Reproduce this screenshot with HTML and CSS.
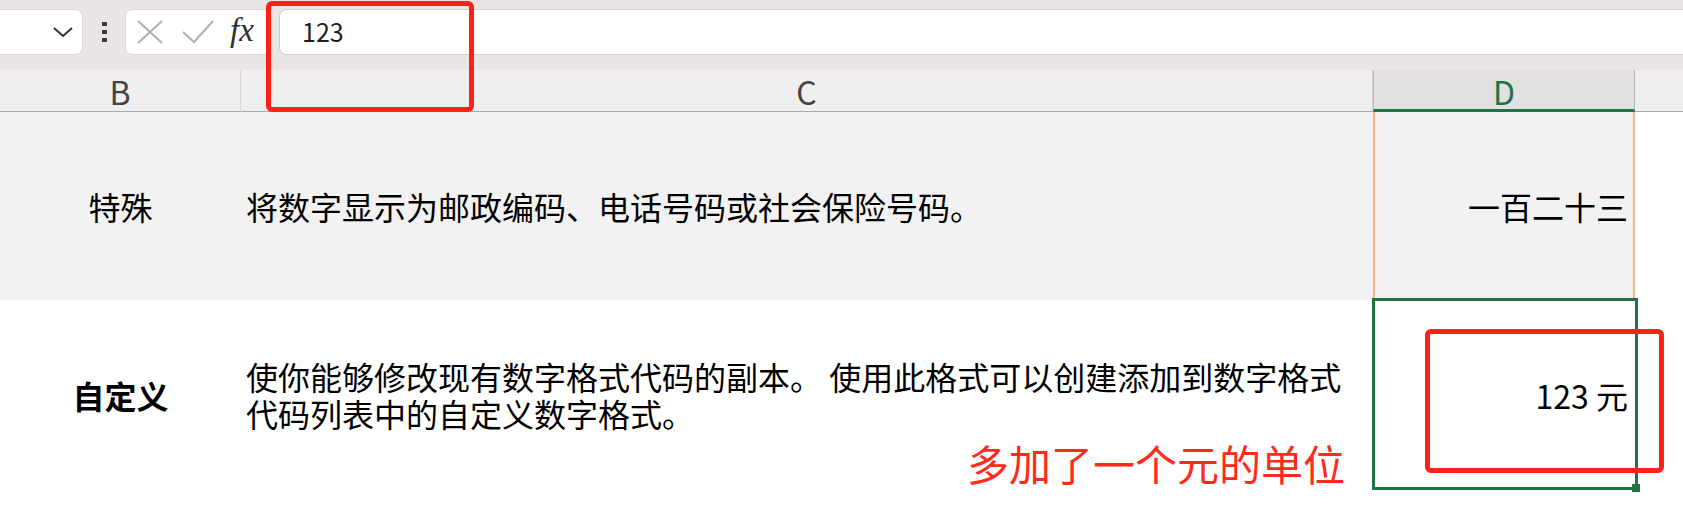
FILE: index.html
```html
<!DOCTYPE html>
<html lang="zh-CN">
<head>
    <meta charset="UTF-8">
    <title>数字格式 - 自定义</title>
    <link rel="stylesheet" href="styles.css">
</head>
<body>

    <!-- Formula bar -->
    <div class="toolbar">
        <div class="namebox">
            <svg class="chevron" width="20" height="12" viewBox="0 0 20 12">
                <polyline points="1,2 10,10 19,2" fill="none" stroke="#333" stroke-width="2"/>
            </svg>
        </div>
        <div class="grip"><span></span><span></span><span></span></div>
        <div class="fbtns">
            <svg width="26" height="24" viewBox="0 0 26 24">
                <path d="M1 1 L25 23 M25 1 L1 23" stroke="#b0b0b0" stroke-width="2" fill="none"/>
            </svg>
            <svg class="check" width="32" height="24" viewBox="0 0 32 24">
                <polyline points="1,12 12,22 31,1" stroke="#b0b0b0" stroke-width="2" fill="none"/>
            </svg>
            <span class="fx">fx</span>
        </div>
        <div class="finput">123</div>
    </div>

    <!-- Sheet -->
    <div class="sheet">
        <div class="hd">B</div>
        <div class="hd">C</div>
        <div class="hd hd-sel">D</div>
        <div class="hd hd-rest"></div>

        <div class="cell c-name shade">特殊</div>
        <div class="cell c-desc shade">将数字显示为邮政编码、电话号码或社会保险号码。</div>
        <div class="cell c-val shade sel-col">一百二十三</div>
        <div class="cell"></div>

        <div class="cell c-name strong">自定义</div>
        <div class="cell c-desc">
            <span class="wrap">使你能够修改现有数字格式代码的副本。 使用此格式可以创建添加到数字格式代码列表中的自定义数字格式。</span>
        </div>
        <div class="cell c-val active">
            123 元
            <span class="sel-box"></span>
            <span class="handle"></span>
        </div>
        <div class="cell"></div>
    </div>

    <!-- Annotations -->
    <div class="mark mark-formula"></div>
    <div class="mark mark-cell"></div>
    <div class="note">多加了一个元的单位</div>

</body>
</html>
```

FILE: styles.css
```css
/* General */
body {
    margin: 0;
    width: 1683px;
    height: 515px;
    overflow: hidden;
    background: #ffffff;
    font-family: "Noto Sans CJK SC", "Noto Sans", sans-serif;
    color: #000000;
    position: relative;
}

/* Formula bar */
.toolbar {
    height: 70px;
    background: #ebe6e6;
    display: flex;
    align-items: flex-start;
    padding-top: 9px;
    box-sizing: border-box;
}

.namebox {
    width: 83px;
    height: 46px;
    box-sizing: border-box;
    background: #ffffff;
    border: 1px solid #ddd7d7;
    border-left: none;
    border-radius: 0 7px 7px 0;
    display: flex;
    align-items: center;
    justify-content: flex-end;
    padding-right: 9px;
}

.grip {
    margin-left: 19px;
    width: 5px;
    height: 46px;
    display: flex;
    flex-direction: column;
    justify-content: center;
    gap: 4px;
}

.grip span {
    width: 5px;
    height: 4px;
    background: #3c3c3c;
}

.fbtns {
    margin-left: 18px;
    width: 145px;
    height: 46px;
    box-sizing: border-box;
    background: #ffffff;
    border: 1px solid #ddd7d7;
    border-radius: 7px;
    display: flex;
    align-items: center;
    padding-left: 11px;
}

.fbtns .check {
    margin-left: 19px;
}

.fx {
    margin-left: 16px;
    font-family: "Liberation Serif", "DejaVu Serif", serif;
    font-style: italic;
    font-size: 33px;
    line-height: 40px;
    color: #2e2e2e;
    margin-top: -4px;
}

.finput {
    margin-left: 9px;
    flex: 1;
    height: 46px;
    box-sizing: border-box;
    background: #ffffff;
    border: 1px solid #cfcfcf;
    border-right: none;
    border-radius: 7px 0 0 7px;
    padding-left: 22px;
    font-size: 25px;
    line-height: 43px;
    color: #1e1e1e;
}

/* Sheet grid */
.sheet {
    display: grid;
    grid-template-columns: 241px 1132px 262px 1fr;
    grid-template-rows: 42px 188px 190px;
}

.hd {
    box-sizing: border-box;
    background: #efefef;
    border-bottom: 1px solid #ababab;
    border-right: 1px solid #d6d6d6;
    font-size: 32px;
    color: #444444;
    display: flex;
    align-items: center;
    justify-content: center;
}

.hd-sel {
    background: #e1e1e1;
    border-left: 1px solid #b4b4b4;
    border-right: 1px solid #b4b4b4;
    border-bottom: 3px solid #217346;
    color: #217346;
    padding-top: 2px;
}

.hd-rest {
    border-right: none;
}

.cell {
    box-sizing: border-box;
    font-size: 32px;
    line-height: 37px;
    display: flex;
    align-items: center;
}

.shade {
    background: #f2f2f2;
}

.c-name {
    justify-content: center;
}

.strong {
    font-weight: 700;
}

.c-desc {
    padding-left: 5px;
}

.wrap {
    max-width: 1112px;
}

.c-val {
    justify-content: flex-end;
    padding-right: 7px;
}

.sel-col {
    border-left: 2px solid #f4b183;
    border-right: 2px solid #f4b183;
    padding-right: 5px;
}

.active {
    position: relative;
}

.sel-box {
    position: absolute;
    top: -2px;
    left: -1px;
    right: -3px;
    bottom: 0;
    border: 3px solid #217346;
}

.handle {
    position: absolute;
    right: -5px;
    bottom: -2px;
    width: 8px;
    height: 8px;
    background: #217346;
}

/* Red annotations */
.mark {
    position: absolute;
    box-sizing: border-box;
    border: 5px solid #ff2116;
    border-radius: 6px;
}

.mark-formula {
    left: 266px;
    top: 1px;
    width: 208px;
    height: 111px;
}

.mark-cell {
    left: 1425px;
    top: 329px;
    width: 239px;
    height: 144px;
}

.note {
    position: absolute;
    left: 967px;
    top: 437px;
    font-size: 42px;
    line-height: 52px;
    color: #ff2a1c;
}
```
